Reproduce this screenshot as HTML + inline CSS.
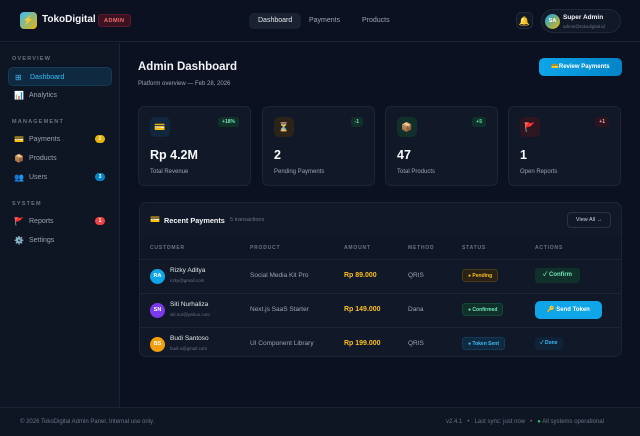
<!DOCTYPE html><html><head><meta charset="utf-8"><style>
*{box-sizing:border-box;margin:0;padding:0}
body{width:640px;height:436px;overflow:hidden;background:#0b1120;font-family:"Liberation Sans","Noto Sans CJK SC",sans-serif;color:#e5e7eb;position:relative}
.hdr{position:absolute;left:0;top:0;width:640px;height:42px;border-bottom:1px solid #1a2233;background:#0b1120}
.logo{position:absolute;left:20px;top:12px;width:17px;height:17px;border-radius:4px;background:linear-gradient(135deg,#38bdf8,#eab308);font-size:9px;text-align:center;line-height:17px}
.brand{position:absolute;left:42px;top:14px;font-size:10px;font-weight:bold;color:#f3f4f6}
.adm{position:absolute;left:98px;top:14px;padding:0 5px;height:13px;line-height:13px;font-size:5.5px;font-weight:bold;color:#f87171;background:#3b1220;border:1px solid #5b1a2a;border-radius:3px;letter-spacing:.5px}
.nav{position:absolute;top:13px;font-size:7px;color:#9ca3af;height:16px;line-height:16px;padding:0 9px;border-radius:5px}
.bell{position:absolute;left:516px;top:12px;width:17px;height:17px;border-radius:5px;background:#111827;font-size:9px;text-align:center;line-height:17px;border:1px solid #1f2937}
.user{position:absolute;left:541px;top:9px;width:80px;height:24px;border-radius:12px;background:#111827;border:1px solid #1f2937}
.av{position:absolute;width:13px;height:13px;border-radius:50%;font-size:5.5px;font-weight:bold;color:#fff;text-align:center;line-height:13px}
.side{position:absolute;left:0;top:43px;width:120px;height:364px;background:#0e1523;border-right:1px solid #1a2233}
.sec{position:absolute;left:12px;font-size:5.5px;letter-spacing:1.2px;color:#6b7280;font-weight:bold}
.it{position:absolute;left:8px;width:104px;height:19px;line-height:19px;font-size:7px;color:#9ca3af;padding-left:21px}
.it i{position:absolute;left:6px;font-style:normal;font-size:8px}
.bd{position:absolute;right:7px;top:5px;width:10px;height:8px;border-radius:4px;font-size:5px;color:#fff;text-align:center;line-height:8px;font-weight:bold}
.card{position:absolute;top:106px;width:113px;height:80px;background:#111827;border:1px solid #1c2536;border-radius:6px}
.ci{position:absolute;left:11px;top:10px;width:20px;height:20px;border-radius:5px;font-size:9px;text-align:center;line-height:20px}
.ch{position:absolute;right:11px;top:10px;padding:0 4px;height:10px;line-height:10px;border-radius:3px;font-size:5px;font-weight:bold}
.cv{position:absolute;left:11px;top:41px;font-size:12.5px;font-weight:bold;color:#f9fafb}
.cl{position:absolute;left:11px;top:62px;font-size:6px;color:#9ca3af}
.tbl{position:absolute;left:139px;top:202px;width:483px;height:155px;background:#111827;border:1px solid #1c2536;border-radius:7px;overflow:hidden}
.th{position:absolute;top:42px;font-size:5px;letter-spacing:.8px;color:#6b7280;font-weight:bold}
.row{position:absolute;left:0;width:483px;height:34px;border-top:1px solid #1c2536}
.row span{position:absolute}
.nm{font-size:6.5px;color:#e5e7eb}
.em{font-size:4.5px;color:#6b7280}
.pr{font-size:6.5px;color:#9ca3af;top:12px}
.amt{font-size:7px;color:#fbbf24;font-weight:bold;top:12px}
.st{font-size:5px;font-weight:bold;height:13px;line-height:13px;padding:0 5px;border-radius:3px;top:9px}
.foot{position:absolute;left:0;top:407px;width:640px;height:29px;background:#0e1523;border-top:1px solid #1a2233;font-size:6px;color:#6b7280}
</style></head><body>
<div class="hdr">
<div class="logo">⚡</div><div class="brand">TokoDigital</div><div class="adm">ADMIN</div>
<div class="nav" style="left:249px;background:#1a2231;color:#e5e7eb">Dashboard</div>
<div class="nav" style="left:300px">Payments</div>
<div class="nav" style="left:353px">Products</div>
<div class="bell">🔔</div>
<div class="user"><div class="av" style="left:3px;top:4px;width:15px;height:15px;line-height:15px;background:linear-gradient(135deg,#0ea5e9,#eab308)">SA</div>
<div style="position:absolute;left:21px;top:4px;font-size:6.5px;font-weight:bold;color:#f3f4f6">Super Admin</div>
<div style="position:absolute;left:21px;top:14px;font-size:4.5px;color:#6b7280">admin@tokodigital.id</div></div>
</div>
<div class="side">
<div class="sec" style="top:13px">OVERVIEW</div>
<div class="it" style="top:24px;background:#0f2a40;color:#38bdf8;border:1px solid #163a55;border-radius:5px"><i>⊞</i>Dashboard</div>
<div class="it" style="top:43px"><i>📊</i>Analytics</div>
<div class="sec" style="top:76px">MANAGEMENT</div>
<div class="it" style="top:87px"><i>💳</i>Payments<div class="bd" style="background:#eab308">2</div></div>
<div class="it" style="top:106px"><i>📦</i>Products</div>
<div class="it" style="top:125px"><i>👥</i>Users<div class="bd" style="background:#0284c7">3</div></div>
<div class="sec" style="top:158px">SYSTEM</div>
<div class="it" style="top:169px"><i>🚩</i>Reports<div class="bd" style="background:#ef4444">1</div></div>
<div class="it" style="top:188px"><i>⚙️</i>Settings</div>
</div>
<div style="position:absolute;left:138px;top:61px;font-size:11.5px;font-weight:bold;color:#f3f4f6">Admin Dashboard</div>
<div style="position:absolute;left:138px;top:81px;font-size:6px;color:#9ca3af">Platform overview — Feb 28, 2026</div>
<div style="position:absolute;left:539px;top:58px;width:83px;height:18px;border-radius:5px;background:linear-gradient(90deg,#0ea5e9,#0284c7);font-size:6px;font-weight:bold;color:#fff;text-align:center;line-height:18px">💳Review Payments</div>
<div class="card" style="left:138px"><div class="ci" style="background:#10273d">💳</div><div class="ch" style="background:#10302a;color:#6ee7b7">+18%</div><div class="cv">Rp 4.2M</div><div class="cl">Total Revenue</div></div>
<div class="card" style="left:262px"><div class="ci" style="background:#2a2518">⏳</div><div class="ch" style="background:#10302a;color:#6ee7b7">-1</div><div class="cv">2</div><div class="cl">Pending Payments</div></div>
<div class="card" style="left:385px"><div class="ci" style="background:#12302a">📦</div><div class="ch" style="background:#10302a;color:#6ee7b7">+5</div><div class="cv">47</div><div class="cl">Total Products</div></div>
<div class="card" style="left:508px"><div class="ci" style="background:#2e1620">🚩</div><div class="ch" style="background:#2a1520;color:#fca5a5">+1</div><div class="cv">1</div><div class="cl">Open Reports</div></div>
<div class="tbl">
<div style="position:absolute;left:10px;top:12px;font-size:8px">💳</div>
<div style="position:absolute;left:24px;top:13px;font-size:7.3px;font-weight:bold;color:#f3f4f6">Recent Payments</div>
<div style="position:absolute;left:90px;top:14px;font-size:5.5px;color:#6b7280">5 transactions</div>
<div style="position:absolute;left:427px;top:9px;width:44px;height:16px;border:1px solid #2a3447;border-radius:4px;font-size:5.5px;color:#d1d5db;text-align:center;line-height:15px">View All →</div>
<div style="position:absolute;left:0;top:34px;width:483px;height:22px;background:#0f1625"></div>
<div class="th" style="left:10px">CUSTOMER</div><div class="th" style="left:110px">PRODUCT</div><div class="th" style="left:204px">AMOUNT</div><div class="th" style="left:268px">METHOD</div><div class="th" style="left:322px">STATUS</div><div class="th" style="left:395px">ACTIONS</div>
<div class="row" style="top:56px"><div class="av" style="left:10px;top:9px;width:15px;height:15px;line-height:15px;background:#0ea5e9">RA</div><span class="nm" style="left:30px;top:7px">Rizky Aditya</span><span class="em" style="left:30px;top:18px">rizky@gmail.com</span><span class="pr" style="left:110px">Social Media Kit Pro</span><span class="amt" style="left:204px">Rp 89.000</span><span class="pr" style="left:268px">QRIS</span><span class="st" style="left:322px;background:#2a2214;color:#fbbf24;border:1px solid #4a3a18">● Pending</span><span class="st" style="left:395px;top:8px;height:15px;line-height:15px;padding:0 8px;background:#10302a;color:#6ee7b7;font-size:6px">✓ Confirm</span></div>
<div class="row" style="top:90px"><div class="av" style="left:10px;top:9px;width:15px;height:15px;line-height:15px;background:#7c3aed">SN</div><span class="nm" style="left:30px;top:7px">Siti Nurhaliza</span><span class="em" style="left:30px;top:18px">siti.nur@yahoo.com</span><span class="pr" style="left:110px">Next.js SaaS Starter</span><span class="amt" style="left:204px">Rp 149.000</span><span class="pr" style="left:268px">Dana</span><span class="st" style="left:322px;background:#10302a;color:#6ee7b7;border:1px solid #174536">● Confirmed</span><span class="st" style="left:395px;top:7px;height:18px;line-height:18px;width:67px;text-align:center;background:#0ea5e9;color:#fff;font-size:6px;border-radius:5px">🔑 Send Token</span></div>
<div class="row" style="top:124px"><div class="av" style="left:10px;top:9px;width:15px;height:15px;line-height:15px;background:#f59e0b">BS</div><span class="nm" style="left:30px;top:7px">Budi Santoso</span><span class="em" style="left:30px;top:18px">budi.s@gmail.com</span><span class="pr" style="left:110px">UI Component Library</span><span class="amt" style="left:204px">Rp 199.000</span><span class="pr" style="left:268px">QRIS</span><span class="st" style="left:322px;background:#0f2a40;color:#38bdf8;border:1px solid #163a55">● Token Sent</span><span class="st" style="left:395px;background:#0f2238;color:#38bdf8">✓ Done</span></div>
</div>
<div class="foot"><span style="position:absolute;left:20px;top:11px">© 2026 TokoDigital Admin Panel. Internal use only.</span><span style="position:absolute;left:446px;top:11px">v2.4.1 &nbsp; • &nbsp; Last sync: just now &nbsp; • &nbsp; <span style="color:#22c55e">●</span> All systems operational</span></div>
</body></html>
